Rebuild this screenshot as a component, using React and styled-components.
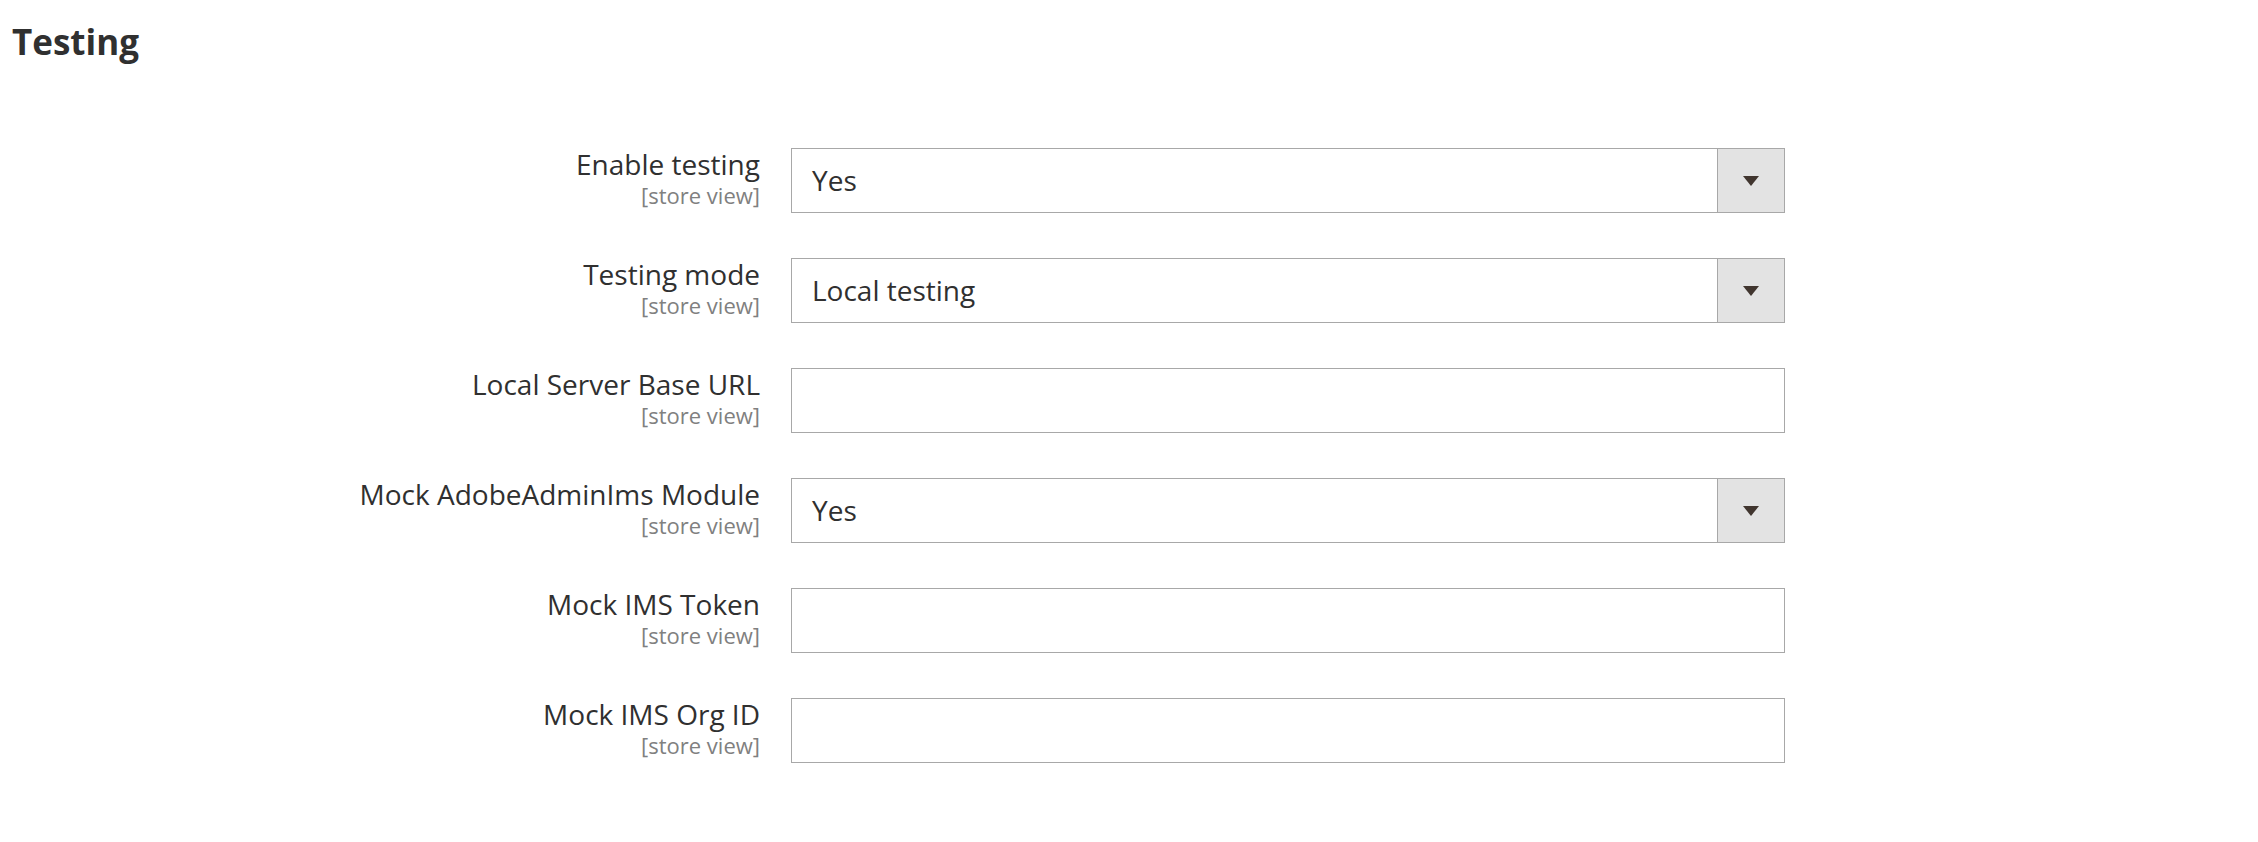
import React from 'react';
import styled, { createGlobalStyle } from 'styled-components';

const GlobalStyle = createGlobalStyle`
	html, body {
		margin: 0;
		padding: 0;
		background: #ffffff;
	}
	body {
		font-family: "Open Sans", "Noto Sans", sans-serif;
		color: #303030;
	}
`;

const Page = styled.div`
	width: 2258px;
	min-height: 842px;
	padding-top: 21px;
	box-sizing: border-box;
`;

const Title = styled.h2`
	margin: 0 0 0 12px;
	font-size: 35px;
	font-weight: 700;
	line-height: 1.2;
	color: #303030;
`;

const Fieldset = styled.div`
	display: grid;
	grid-template-columns: 760px 994px;
	column-gap: 31px;
	row-gap: 45px;
	margin-top: 85px;
`;

const Label = styled.label`
	display: flex;
	flex-direction: column;
	align-items: flex-end;
	text-align: right;
`;

const LabelText = styled.span`
	font-size: 28px;
	line-height: 1.2;
	color: #303030;
`;

const Scope = styled.span`
	font-size: 22px;
	line-height: 1.2;
	color: #808080;
`;

const TextInput = styled.input`
	display: block;
	width: 994px;
	height: 65px;
	margin: 0;
	padding: 0 20px;
	box-sizing: border-box;
	border: 1px solid #a8a8a8;
	border-radius: 0;
	background: #ffffff;
	font-family: inherit;
	font-size: 28px;
	color: #303030;
	outline: none;
`;

const SelectBox = styled.div`
	display: flex;
	width: 994px;
	height: 65px;
	box-sizing: border-box;
	border: 1px solid #a8a8a8;
	background: #ffffff;
`;

const SelectValue = styled.div`
	flex: 1;
	display: flex;
	align-items: center;
	padding: 0 20px 2px;
	font-size: 28px;
	color: #303030;
`;

const SelectButton = styled.div`
	width: 66px;
	display: flex;
	align-items: center;
	justify-content: center;
	border-left: 1px solid #a8a8a8;
	background: #e3e3e3;
`;

const Arrow = () => (
	<svg width="16" height="10" viewBox="0 0 16 10">
		<polygon points="0,0 16,0 8,10" fill="#41362f" />
	</svg>
);

const fields = [
	{ label: 'Enable testing', type: 'select', value: 'Yes' },
	{ label: 'Testing mode', type: 'select', value: 'Local testing' },
	{ label: 'Local Server Base URL', type: 'text' },
	{ label: 'Mock AdobeAdminIms Module', type: 'select', value: 'Yes' },
	{ label: 'Mock IMS Token', type: 'text' },
	{ label: 'Mock IMS Org ID', type: 'text' },
];

export default function App() {
	return (
		<Page>
			<GlobalStyle />
			<Title>Testing</Title>
			<Fieldset>
				{fields.map((f) => (
					<React.Fragment key={f.label}>
						<Label>
							<LabelText>{f.label}</LabelText>
							<Scope>[store view]</Scope>
						</Label>
						{f.type === 'select' ? (
							<SelectBox>
								<SelectValue>{f.value}</SelectValue>
								<SelectButton>
									<Arrow />
								</SelectButton>
							</SelectBox>
						) : (
							<TextInput type="text" defaultValue="" />
						)}
					</React.Fragment>
				))}
			</Fieldset>
		</Page>
	);
}
